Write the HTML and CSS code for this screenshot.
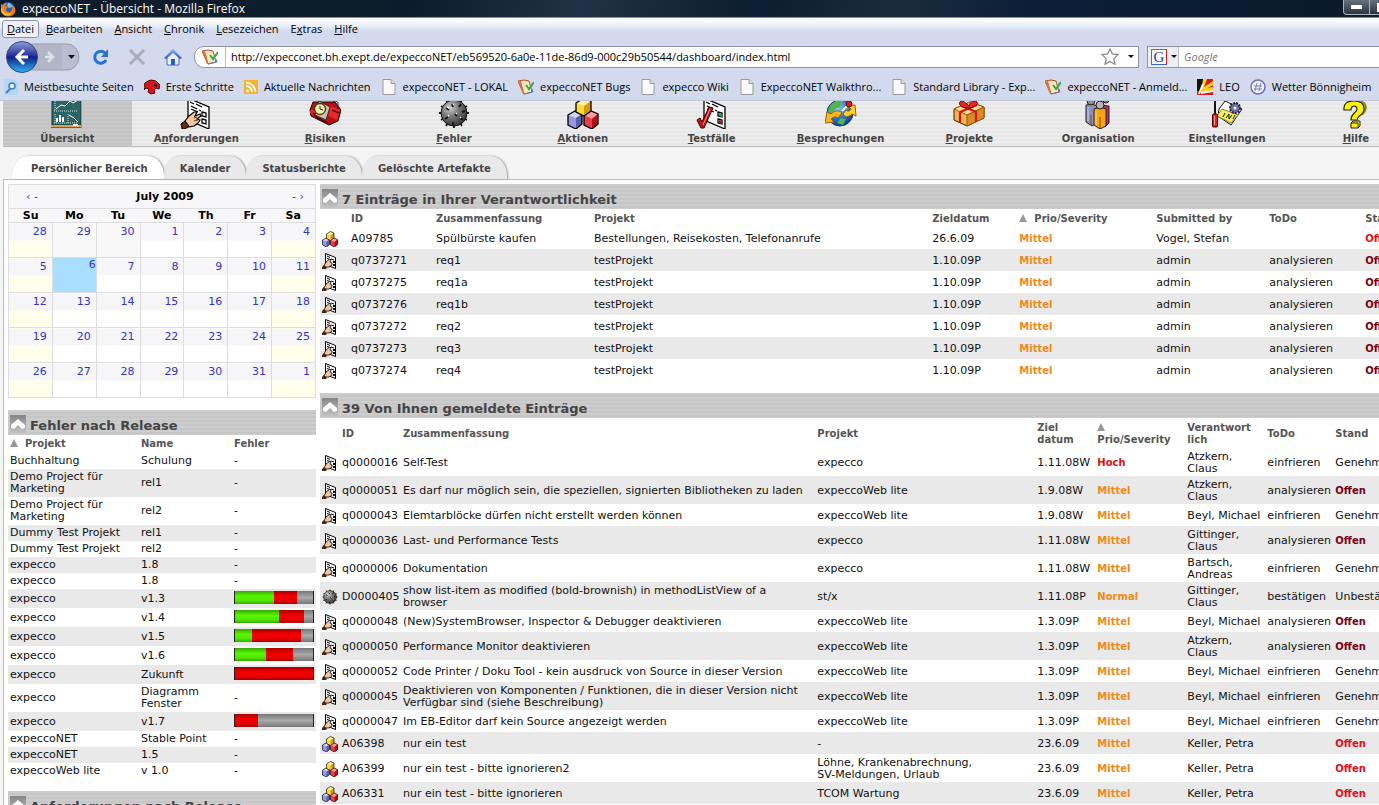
FILE: index.html
```html
<!DOCTYPE html>
<html lang="de">
<head>
    <meta charset="UTF-8">
    <meta name="viewport" content="width=device-width, initial-scale=1.0">
    <title>expeccoNET - Übersicht</title>
    <link rel="stylesheet" href="styles.css">
</head>
<body>
    <!-- Icon definitions -->
    <svg class="defs" width="0" height="0" aria-hidden="true">
        <defs>
            <linearGradient id="blueBall" x1="0" y1="0" x2="0" y2="1">
                <stop offset="0" stop-color="#8f9fd6"/><stop offset=".45" stop-color="#27349c"/><stop offset=".5" stop-color="#101f86"/><stop offset="1" stop-color="#2fb5f5"/>
            </linearGradient>
            <radialGradient id="mineFill" cx=".35" cy=".3" r=".8">
                <stop offset="0" stop-color="#d0d0d0"/><stop offset=".4" stop-color="#7c7c7c"/><stop offset="1" stop-color="#2b2b2b"/>
            </radialGradient>
            <radialGradient id="globeFill" cx=".4" cy=".3" r=".8">
                <stop offset="0" stop-color="#8fd0ff"/><stop offset=".5" stop-color="#2a78cc"/><stop offset="1" stop-color="#0d2f78"/>
            </radialGradient>
            <linearGradient id="houseFill" x1="0" y1="0" x2="0" y2="1">
                <stop offset="0" stop-color="#8fb0f0"/><stop offset="1" stop-color="#2b57bd"/>
            </linearGradient>
        </defs>
        <symbol id="i-board" viewBox="0 0 32 32">
            <path d="M1 0h29v28H1z" fill="#2d6565" stroke="#143636"/>
            <path d="M3 14h24M3 26h24M17 17v9M4 2v12M4 17v9" stroke="#d5e8e8" stroke-dasharray="1 1" fill="none"/>
            <path d="M5 12l5-4 4 1 5-5 3 2 5-3" stroke="#fff" fill="none"/>
            <path d="M6 21v4M9 18v7M12 20v5" stroke="#fff" stroke-width="2"/>
            <path d="M18 18l5 3 4 4" stroke="#fff" fill="none"/>
            <path d="M0 28h30v2H0z" fill="#d9a25c"/><path d="M0 30h30v1H0z" fill="#8a5a23"/>
            <path d="M22 27h5v2h-5z" fill="#fff"/><path d="M30 2h1v29h-1z" fill="#999"/>
        </symbol>
        <symbol id="i-sheet" viewBox="0 0 32 32">
            <path d="M8 1l21 9v22L8 23z" fill="#fff" stroke="#000" stroke-width="1.300"/>
            <path d="M10 5l4 2M16 7l6 3M11 9l6 3M11 12l7 3M19 13l2 1" stroke="#000" stroke-width="1.300"/>
            <path d="M22 15l4 1v4l-4-1zM22 22l4 1v4l-4-1z" fill="#fff" stroke="#000" stroke-width="1.300"/>
        </symbol>
        <symbol id="i-request" viewBox="0 0 32 32">
            <use href="#i-sheet"/>
            <path d="M5 24l4-5 5-4h3l-2 4 5-2 1 2-4 3 3 1-2 3-4 3-6 1z" fill="#f6c9a0" stroke="#000" stroke-width="1.200"/>
            <path d="M14 21l3-1M14 24l4-1" stroke="#6a3f20"/>
            <path d="M1 27l4-3 4 5-4 3H2z" fill="#5a2f17" stroke="#000"/>
        </symbol>
        <symbol id="i-request-small" viewBox="0 0 16 16">
            <path d="M3.500 .5l10 4v11l-10-4z" fill="#fff" stroke="#000"/>
            <path d="M5 3l3 1.500M5 5.500l3 1M9 6l3 1" stroke="#000"/>
            <path d="M11 8h2v2h-2zM11 11h2v2h-2z" fill="#000"/>
            <path d="M2 13l2-4 4-3 1 1-1 2 2 1v2l-3 2H3z" fill="#f3c6a2" stroke="#000" stroke-width=".8"/>
            <path d="M0 14l2-2 3 3-1 1H0z" fill="#4a2410"/>
        </symbol>
        <symbol id="i-test" viewBox="0 0 32 32">
            <use href="#i-sheet"/>
            <path d="M23 16l3 1v3l-3-1z" fill="#2aa03a"/><path d="M23 23l3 1v3l-3-1z" fill="#c01010"/>
            <path d="M1 23l3-2 2 4 7-15 4 1-9 20H5z" fill="#c4161c" stroke="#3b0000"/>
            <path d="M7 28l7-16" stroke="#ff8a8a"/>
        </symbol>
        <symbol id="i-risk" viewBox="0 0 32 32">
            <path d="M4 5l22 0 6 8-3 11-9 4-18-9-1-6z" fill="#b70f14" stroke="#2a0000"/>
            <path d="M22 9l9 4-3 10-9-4zM2 12l5 3-2 4-4-3z" fill="#e9272c"/>
            <path d="M7 20l12 6M23 13l7 3M4 16l4 4" stroke="#5d0004" stroke-width="1.500"/>
            <path d="M10 4l11 6-4 13-11-5z" fill="#c6c2b5" stroke="#333"/>
            <circle cx="11" cy="12" r="5.500" fill="#f5edb2" stroke="#4b3a00" stroke-width="1.300"/>
            <path d="M11 9v3l3 1" stroke="#222" fill="none"/>
            <path d="M23 7c2-5 7-3 6 1s1 4 2 3" stroke="#222" fill="none"/>
        </symbol>
        <symbol id="i-mine" viewBox="0 0 32 32">
            <path d="M16 1v30M3 9l26 14M3 23L29 9M8 3l16 26M24 3L8 29M1 16h30" stroke="#111" stroke-width="1.800"/>
            <circle cx="16" cy="16" r="13" fill="url(#mineFill)" stroke="#111"/>
            <path d="M8 11l3 2M14 7l1 3M21 10l2-3M10 20l-3 2M17 17l2 2M22 21l3 2M15 25l0 3M24 15l3-1" stroke="#111" stroke-width="2"/>
            <path d="M9 10l2 1M15 7l1 1M18 16l1 1M22 20l1 1M10 19l1-1" stroke="#fff" stroke-width="1.500"/>
        </symbol>
        <symbol id="i-cubes" viewBox="0 0 32 32">
            <path d="M1 18l7-4 7 3v10l-6 5-8-4z" fill="#9698e0"/>
            <path d="M1 18l8 3 6-4-7-3z" fill="#d3d4fb"/><path d="M9 21v11l6-5V17z" fill="#5c5eae"/>
            <path d="M1 18l7-4 7 3v10l-6 5-8-4z" fill="none" stroke="#000" stroke-width="1.300"/>
            <path d="M17 18l7-4 7 3v10l-6 5-8-4z" fill="#e8404b"/>
            <path d="M17 18l8 4 6-5-7-3z" fill="#ff9a9f"/><path d="M25 22v10l6-5V17z" fill="#b80d18"/>
            <path d="M17 18l7-4 7 3v10l-6 5-8-4z" fill="none" stroke="#000" stroke-width="1.300"/>
            <path d="M9 6l8-5 7 3v10l-7 5-8-4z" fill="#ffd83a"/>
            <path d="M9 6l8 3 7-5-7-3z" fill="#fff2a0"/><path d="M17 9v10l7-5V4z" fill="#d99a08"/>
            <path d="M9 6l8-5 7 3v10l-7 5-8-4z" fill="none" stroke="#000" stroke-width="1.300"/>
        </symbol>
        <symbol id="i-globe" viewBox="0 0 32 32">
            <circle cx="15" cy="16" r="13" fill="url(#globeFill)" stroke="#123a70"/>
            <path d="M5 9l6-5 7 0-3 6-5 2-3 4-4-1zM20 6l5 4-4 4zM12 26l4-5 5 1-3 6z" fill="#53b54b"/>
            <path d="M0 26l2-11 4 2c4-4 8-4 11-1l-4 5c-3-2-5-1-7 1l3 3z" fill="#ffb61c" stroke="#a06000"/>
            <path d="M30 8l1 11-4-2c-4 4-7 3-9 0l3-4c2 2 4 1 5-1l-3-3z" fill="#ffcf32" stroke="#a06000"/>
            <path d="M17 14l7-7" stroke="#fff" stroke-width="2"/><circle cx="24" cy="7" r="3" fill="#e01a24" stroke="#700"/>
        </symbol>
        <symbol id="i-gift" viewBox="0 0 32 32">
            <path d="M1 12l16-7 14 5v11l-17 8-13-6z" fill="#f4b44f" stroke="#3c1c00"/>
            <path d="M1 12l13 6 17-8-14-5z" fill="#ffdc94" stroke="#9a5b10"/>
            <path d="M14 18l17-8v11l-17 8z" fill="#d98a21" stroke="#9a5b10"/>
            <path d="M7 15v11M23 14v11M7 15l17-7M9 9l14 6" stroke="#d8141b" stroke-width="2.200"/>
            <path d="M16 11C9 11 5 8 7 5s7 2 9 4c1-5 6-6 8-4s-3 5-8 6z" fill="#e8262c" stroke="#7d0005"/>
        </symbol>
        <symbol id="i-people" viewBox="0 0 32 32">
            <g stroke="#222">
                <path d="M19 8l8 1v17l-4 4-4-3z" fill="#b72c68"/>
                <path d="M4 8l6-1 5 2v17l-5 3-6-4z" fill="#8d92c6"/>
                <circle cx="9" cy="4" r="4" fill="#8f8f8f"/><circle cx="24" cy="3" r="3" fill="#777"/>
                <path d="M12 12l6-2 6 2v17l-6 3-6-4z" fill="#f8a310"/>
                <circle cx="18" cy="8" r="4" fill="#b4b4b4"/>
            </g>
            <path d="M14 14v14M6 10v14" stroke="#fff" opacity=".6"/><path d="M18 20v11M9 18v10" stroke="#7a4a00"/>
        </symbol>
        <symbol id="i-settings" viewBox="0 0 32 32">
            <path d="M8 12l6-8 17 8-11 16-13-9z" fill="#fff" stroke="#111"/>
            <path d="M6 19l5-7 16 6-7 8z" fill="#f4ee64" stroke="#8a8414"/>
            <path d="M14 16l-2 4M15 21l3-4v5l3-4M24 18l-2 4" stroke="#111" fill="none"/>
            <circle cx="24" cy="11" r="5" fill="#6c6e9e"/><circle cx="24" cy="11" r="5" fill="none" stroke="#22234d" stroke-dasharray="2 1" stroke-width="2"/><circle cx="24" cy="11" r="1.500" fill="#fff"/>
            <path d="M4 2v15" stroke="#111" stroke-width="2"/><rect x="1.500" y="17" width="5" height="13" rx="1" fill="#e1202a" stroke="#500"/>
            <path d="M3.500 19v9" stroke="#ff9a9a"/>
        </symbol>
        <symbol id="i-help" viewBox="0 0 32 32">
            <path d="M19 3c9 1 10 10 4 15h-6z" fill="#8f8a12"/>
            <path d="M4 13C3 6 8 4 14 4s10 3 10 8c0 7-7 6-7 11h-6c0-7 6-7 6-11 0-4-6-4-6 1z" fill="#fff200" stroke="#222" stroke-width="1.200"/>
            <path d="M11 26l2-2h7v5l-2 2h-7z" fill="#fff200" stroke="#222"/><path d="M11 26h7v5" stroke="#222" fill="none"/>
        </symbol>
        <symbol id="i-page" viewBox="0 0 16 16"><path d="M2 .5h8l4 4v11H2z" fill="#fafafa" stroke="#9b9b9b"/><path d="M10 .5v4h4" fill="#ddd" stroke="#9b9b9b"/></symbol>
        <symbol id="i-expecco" viewBox="0 0 16 16">
            <path d="M0 2l6-1 5 1 3 11-8 2z" fill="#fbe9c0" stroke="#b5482a"/><path d="M0 3l3-1 3 11-1 2z" fill="#d8703b"/>
            <path d="M6 15l9-2-1-3" fill="none" stroke="#4a83c8"/><path d="M8 6l3 4 5-7" fill="none" stroke="#35a845" stroke-width="2"/>
        </symbol>
        <symbol id="i-up" viewBox="0 0 16 18"><path d="M1 10l7-6 7 6v3l-3 1-4-4-4 4-3-1z" fill="#fff"/></symbol>
        <symbol id="i-sort" viewBox="0 0 8 8"><path d="M4 0l4 8H0z" fill="#979797"/></symbol>
    </svg>

    <!-- Browser window -->
    <header class="browser">
        <div class="titlebar">
            <svg width="16" height="16" viewBox="0 0 16 16"><circle cx="8" cy="8" r="7" fill="#2b5fb8"/><path d="M8 2c3 0 4 2 4 4l-3 1-2-2z" fill="#7fc4f4"/><path d="M1 3l2 1c1-2 3-2 4-2L5 5l3 1-2 2c0 4 5 4 6 1 1-2 0-4-1-5 4 1 5 4 4 7-1 6-14 6-14-2z" fill="#f07d16"/><path d="M2 6c0 6 5 8 10 6-3 4-11 3-11-4z" fill="#ffc23a"/></svg>
            <span class="window-title">expeccoNET - Übersicht - Mozilla Firefox</span>
            <span class="window-buttons">
                <button type="button" aria-label="Minimieren"><i class="minimize"></i></button>
                <button type="button" aria-label="Maximieren"><i class="maximize"></i></button>
            </span>
        </div>
        <nav class="menubar">
            <button type="button" class="open"><u>D</u>atei</button>
            <button type="button"><u>B</u>earbeiten</button>
            <button type="button"><u>A</u>nsicht</button>
            <button type="button"><u>C</u>hronik</button>
            <button type="button"><u>L</u>esezeichen</button>
            <button type="button">E<u>x</u>tras</button>
            <button type="button"><u>H</u>ilfe</button>
        </nav>
        <div class="toolbar">
            <button type="button" class="history" aria-label="Zurück">
                <svg width="78" height="34" viewBox="0 0 78 34">
                    <path d="M19 4h46a11 12 0 0 1 0 26H19z" fill="#b9bfd0" stroke="#959bad"/>
                    <path d="M30 5h30v24H30z" fill="#b0b6c6"/>
                    <path d="M46 12l5 5-5 5M43 17h8" fill="none" stroke="#dde1ec" stroke-width="2.500"/>
                    <path d="M66 15h7l-3.500 4z" fill="#111"/>
                    <circle cx="20" cy="17" r="15.500" fill="url(#blueBall)" stroke="#39457e"/>
                    <path d="M22 10l-7 7 7 7M15 17h11" fill="none" stroke="#fff" stroke-width="3"/>
                </svg>
            </button>
            <button type="button" aria-label="Neu laden"><svg width="18" height="18" viewBox="0 0 18 18"><path d="M14 12a6 6 0 1 1-1-7" fill="none" stroke="#2472d6" stroke-width="3"/><path d="M16 1v8H9z" fill="#2472d6"/></svg></button>
            <button type="button" aria-label="Stopp"><svg width="18" height="18" viewBox="0 0 18 18"><path d="M2 2l14 14M16 2L2 16" stroke="#a9acb6" stroke-width="3"/></svg></button>
            <button type="button" class="home" aria-label="Startseite"><svg width="18" height="18" viewBox="0 0 18 18"><path d="M3 9l6-6 6 6v8H3z" fill="#e6eefc" stroke="#4a6cb5"/><path d="M0 10l9-9 9 9-2 1-7-6-7 6z" fill="url(#houseFill)"/><path d="M7 11h4v6H7z" fill="#2d5cc0"/></svg></button>
            <div class="address">
                <span class="site-icon"><svg width="16" height="16"><use href="#i-expecco"/></svg></span>
                <input type="text" aria-label="Adresse" value="http://expecconet.bh.exept.de/expeccoNET/eb569520-6a0e-11de-86d9-000c29b50544/dashboard/index.html">
                <svg width="18" height="17" viewBox="0 0 18 17"><path d="M9 1l2.300 5 5.700.6-4.200 4 1.100 5.600L9 13.500l-4.900 2.700 1.100-5.600L1 6.600 6.700 6z" fill="#fff" stroke="#8b8b8b" stroke-width="1.300"/></svg>
                <i class="caret"></i>
            </div>
            <div class="search">
                <span class="engine"><b>G</b><i class="caret"></i></span>
                <input type="text" aria-label="Suche" placeholder="Google">
            </div>
        </div>
        <nav class="bookmarks">
            <a href="#"><svg width="14" height="16" viewBox="0 0 14 16"><path d="M0 0h9l5 4v12H0z" fill="#b5d6f4"/><circle cx="8" cy="7" r="3" fill="#e9f4ff" stroke="#3f7ebd" stroke-width="1.500"/><path d="M6 10l-4 4" stroke="#3f7ebd" stroke-width="2"/></svg>Meistbesuchte Seiten</a>
            <a href="#"><svg width="16" height="16" viewBox="0 0 16 16"><path d="M1 4l3-2 3-1 5 1 4 4-1 4-3-1-2 2 1 3-4 1-3-2 1-3-3-1-2 2 1-3-1-2z" fill="#d9141a" stroke="#5a0000"/><path d="M10 6l3 1" stroke="#000" stroke-width="2"/></svg>Erste Schritte</a>
            <a href="#"><svg width="14" height="14" viewBox="0 0 14 14"><path d="M0 0h14v14H0z" fill="#f4b32b"/><circle cx="3.500" cy="11" r="1.500" fill="#fff"/><path d="M2 6a6 6 0 0 1 6 6M2 2.500a10 10 0 0 1 9.500 9.500" fill="none" stroke="#fff" stroke-width="1.800"/></svg>Aktuelle Nachrichten</a>
            <a href="#"><svg width="16" height="16"><use href="#i-page"/></svg>expeccoNET - LOKAL</a>
            <a href="#"><svg width="16" height="16"><use href="#i-expecco"/></svg>expeccoNET Bugs</a>
            <a href="#"><svg width="16" height="16"><use href="#i-page"/></svg>expecco Wiki</a>
            <a href="#"><svg width="16" height="16"><use href="#i-page"/></svg>ExpeccoNET Walkthro...</a>
            <a href="#"><svg width="16" height="16"><use href="#i-page"/></svg>Standard Library - Exp...</a>
            <a href="#"><svg width="16" height="16"><use href="#i-expecco"/></svg>expeccoNET - Anmeld...</a>
            <a href="#"><svg width="16" height="16" viewBox="0 0 16 16"><path d="M0 0h16v16H0z" fill="#d81a1a"/><path d="M0 0h7L3 12H0z" fill="#111"/><path d="M6 0h4L7 8l9-6v4l-5 3 5-1v3L4 14z" fill="#ffcf20"/><path d="M2 15l4-10M4 14l12-2" stroke="#fff" stroke-width="2"/></svg>LEO</a>
            <a href="#"><svg width="16" height="16" viewBox="0 0 16 16"><circle cx="8" cy="8" r="7" fill="#f1f2fb" stroke="#6a6fb0" stroke-width="1.500"/><path d="M7 4L5 12M11 4l-2 8M4 7h8M4 10h8" stroke="#7b80c0"/></svg>Wetter Bönnigheim</a>
        </nav>
    </header>

    <main class="page">
        <nav class="mainnav">
            <a href="#" class="active"><svg><use href="#i-board"/></svg>Übersicht</a>
            <a href="#"><svg><use href="#i-request"/></svg><span>A<u>n</u>forderungen</span></a>
            <a href="#"><svg><use href="#i-risk"/></svg><span><u>R</u>isiken</span></a>
            <a href="#"><svg><use href="#i-mine"/></svg><span><u>F</u>ehler</span></a>
            <a href="#"><svg><use href="#i-cubes"/></svg><span><u>A</u>ktionen</span></a>
            <a href="#"><svg><use href="#i-test"/></svg><span><u>T</u>estfälle</span></a>
            <a href="#"><svg><use href="#i-globe"/></svg><span><u>B</u>esprechungen</span></a>
            <a href="#"><svg><use href="#i-gift"/></svg><span><u>P</u>rojekte</span></a>
            <a href="#"><svg><use href="#i-people"/></svg><span>Or<u>g</u>anisation</span></a>
            <a href="#"><svg><use href="#i-settings"/></svg><span>Ein<u>s</u>tellungen</span></a>
            <a href="#"><svg><use href="#i-help"/></svg><span><u>H</u>ilfe</span></a>
        </nav>
        <nav class="tabs">
            <a href="#" class="active">Persönlicher Bereich</a>
            <a href="#">Kalender</a>
            <a href="#">Statusberichte</a>
            <a href="#">Gelöschte Artefakte</a>
        </nav>

        <div class="panel">
            <aside class="sidebar">
                <div class="month"><span><a href="#">‹</a> <a href="#">-</a></span><strong>July 2009</strong><span><a href="#">-</a> <a href="#">›</a></span></div>
                <table class="calendar">
                    <thead>
                        <tr><th>Su</th><th>Mo</th><th>Tu</th><th>We</th><th>Th</th><th>Fr</th><th>Sa</th></tr>
                    </thead>
                    <tbody>
                        <tr><td class="weekend"><a href="#">28</a></td><td class="other"><a href="#">29</a></td><td class="other"><a href="#">30</a></td><td><a href="#">1</a></td><td><a href="#">2</a></td><td><a href="#">3</a></td><td class="weekend"><a href="#">4</a></td></tr>
                        <tr><td class="weekend"><a href="#">5</a></td><td class="today"><a href="#">6</a></td><td><a href="#">7</a></td><td><a href="#">8</a></td><td><a href="#">9</a></td><td><a href="#">10</a></td><td class="weekend"><a href="#">11</a></td></tr>
                        <tr><td class="weekend"><a href="#">12</a></td><td><a href="#">13</a></td><td><a href="#">14</a></td><td><a href="#">15</a></td><td><a href="#">16</a></td><td><a href="#">17</a></td><td class="weekend"><a href="#">18</a></td></tr>
                        <tr><td class="weekend"><a href="#">19</a></td><td><a href="#">20</a></td><td><a href="#">21</a></td><td><a href="#">22</a></td><td><a href="#">23</a></td><td><a href="#">24</a></td><td class="weekend"><a href="#">25</a></td></tr>
                        <tr><td class="weekend"><a href="#">26</a></td><td><a href="#">27</a></td><td><a href="#">28</a></td><td><a href="#">29</a></td><td><a href="#">30</a></td><td><a href="#">31</a></td><td class="weekend"><a href="#">1</a></td></tr>
                    </tbody>
                </table>

                <section>
                    <h2><button type="button" aria-label="Einklappen"><svg><use href="#i-up"/></svg></button>Fehler nach Release</h2>
                    <table class="list releases">
                        <colgroup><col class="r-project"><col class="r-name"><col></colgroup>
                        <thead>
                            <tr><th><svg class="sort"><use href="#i-sort"/></svg>Projekt</th><th>Name</th><th>Fehler</th></tr>
                        </thead>
                        <tbody>
                            <tr><td>Buchhaltung</td><td>Schulung</td><td>-</td></tr>
                            <tr><td>Demo Project für Marketing</td><td>rel1</td><td>-</td></tr>
                            <tr><td>Demo Project für Marketing</td><td>rel2</td><td>-</td></tr>
                            <tr><td>Dummy Test Projekt</td><td>rel1</td><td>-</td></tr>
                            <tr><td>Dummy Test Projekt</td><td>rel2</td><td>-</td></tr>
                            <tr><td>expecco</td><td>1.8</td><td>-</td></tr>
                            <tr><td>expecco</td><td>1.8</td><td>-</td></tr>
                            <tr><td>expecco</td><td>v1.3</td><td><div class="bar"><i class="done" style="width:50%"></i><i class="open" style="width:30%"></i></div></td></tr>
                            <tr><td>expecco</td><td>v1.4</td><td><div class="bar"><i class="done" style="width:56%"></i><i class="open" style="width:33%"></i></div></td></tr>
                            <tr><td>expecco</td><td>v1.5</td><td><div class="bar"><i class="done" style="width:22%"></i><i class="open" style="width:63%"></i></div></td></tr>
                            <tr><td>expecco</td><td>v1.6</td><td><div class="bar"><i class="done" style="width:40%"></i><i class="open" style="width:35%"></i></div></td></tr>
                            <tr><td>expecco</td><td>Zukunft</td><td><div class="bar"><i class="open" style="width:100%"></i></div></td></tr>
                            <tr><td>expecco</td><td>Diagramm Fenster</td><td>-</td></tr>
                            <tr><td>expecco</td><td>v1.7</td><td><div class="bar"><i class="open" style="width:30%"></i></div></td></tr>
                            <tr><td>expeccoNET</td><td>Stable Point</td><td>-</td></tr>
                            <tr><td>expeccoNET</td><td>1.5</td><td>-</td></tr>
                            <tr><td>expeccoWeb lite</td><td>v 1.0</td><td>-</td></tr>
                        </tbody>
                    </table>
                </section>
                <section>
                    <h2><button type="button" aria-label="Einklappen"><svg><use href="#i-up"/></svg></button>Anforderungen nach Release</h2>
                </section>
            </aside>

            <div class="content">
                <section>
                    <h2><button type="button" aria-label="Einklappen"><svg><use href="#i-up"/></svg></button>7 Einträge in Ihrer Verantwortlichkeit</h2>
                    <table class="list entries">
                        <colgroup><col class="w-icon"><col class="w-id"><col class="w-summary"><col><col class="w-date"><col class="w-prio"><col class="w-user"><col class="w-todo"><col class="w-state"></colgroup>
                        <thead>
                            <tr><th></th><th>ID</th><th>Zusammenfassung</th><th>Projekt</th><th>Zieldatum</th><th><svg class="sort"><use href="#i-sort"/></svg>Prio/Severity</th><th>Submitted by</th><th>ToDo</th><th>Stand</th></tr>
                        </thead>
                        <tbody>
                            <tr><td><svg><use href="#i-cubes"/></svg></td><td>A09785</td><td>Spülbürste kaufen</td><td>Bestellungen, Reisekosten, Telefonanrufe</td><td>26.6.09</td><td class="medium">Mittel</td><td>Vogel, Stefan</td><td></td><td class="open-new">Offen</td></tr>
                            <tr><td><svg><use href="#i-request-small"/></svg></td><td>q0737271</td><td>req1</td><td>testProjekt</td><td>1.10.09P</td><td class="medium">Mittel</td><td>admin</td><td>analysieren</td><td class="open-old">Offen</td></tr>
                            <tr><td><svg><use href="#i-request-small"/></svg></td><td>q0737275</td><td>req1a</td><td>testProjekt</td><td>1.10.09P</td><td class="medium">Mittel</td><td>admin</td><td>analysieren</td><td class="open-old">Offen</td></tr>
                            <tr><td><svg><use href="#i-request-small"/></svg></td><td>q0737276</td><td>req1b</td><td>testProjekt</td><td>1.10.09P</td><td class="medium">Mittel</td><td>admin</td><td>analysieren</td><td class="open-old">Offen</td></tr>
                            <tr><td><svg><use href="#i-request-small"/></svg></td><td>q0737272</td><td>req2</td><td>testProjekt</td><td>1.10.09P</td><td class="medium">Mittel</td><td>admin</td><td>analysieren</td><td class="open-old">Offen</td></tr>
                            <tr><td><svg><use href="#i-request-small"/></svg></td><td>q0737273</td><td>req3</td><td>testProjekt</td><td>1.10.09P</td><td class="medium">Mittel</td><td>admin</td><td>analysieren</td><td class="open-old">Offen</td></tr>
                            <tr><td><svg><use href="#i-request-small"/></svg></td><td>q0737274</td><td>req4</td><td>testProjekt</td><td>1.10.09P</td><td class="medium">Mittel</td><td>admin</td><td>analysieren</td><td class="open-old">Offen</td></tr>
                        </tbody>
                    </table>
                </section>

                <section>
                    <h2><button type="button" aria-label="Einklappen"><svg><use href="#i-up"/></svg></button>39 Von Ihnen gemeldete Einträge</h2>
                    <table class="list entries reported">
                        <colgroup><col class="w-icon"><col class="w-id"><col><col class="w-project"><col class="w-date"><col class="w-prio"><col class="w-user"><col class="w-todo"><col class="w-state"></colgroup>
                        <thead>
                            <tr><th></th><th>ID</th><th>Zusammenfassung</th><th>Projekt</th><th>Ziel<br>datum</th><th><svg class="sort"><use href="#i-sort"/></svg><br>Prio/Severity</th><th>Verantwort<br>lich</th><th>ToDo</th><th>Stand</th></tr>
                        </thead>
                        <tbody>
                            <tr><td><svg><use href="#i-request-small"/></svg></td><td>q0000016</td><td>Self-Test</td><td>expecco</td><td>1.11.08W</td><td class="high">Hoch</td><td>Atzkern,<br>Claus</td><td>einfrieren</td><td>Genehmigt</td></tr>
                            <tr><td><svg><use href="#i-request-small"/></svg></td><td>q0000051</td><td>Es darf nur möglich sein, die speziellen, signierten Bibliotheken zu laden</td><td>expeccoWeb lite</td><td>1.9.08W</td><td class="medium">Mittel</td><td>Atzkern,<br>Claus</td><td>analysieren</td><td class="open-old">Offen</td></tr>
                            <tr><td><svg><use href="#i-request-small"/></svg></td><td>q0000043</td><td>Elemtarblöcke dürfen nicht erstellt werden können</td><td>expeccoWeb lite</td><td>1.9.08W</td><td class="medium">Mittel</td><td>Beyl, Michael</td><td>einfrieren</td><td>Genehmigt</td></tr>
                            <tr><td><svg><use href="#i-request-small"/></svg></td><td>q0000036</td><td>Last- und Performance Tests</td><td>expecco</td><td>1.11.08W</td><td class="medium">Mittel</td><td>Gittinger,<br>Claus</td><td>analysieren</td><td class="open-old">Offen</td></tr>
                            <tr><td><svg><use href="#i-request-small"/></svg></td><td>q0000006</td><td>Dokumentation</td><td>expecco</td><td>1.11.08W</td><td class="medium">Mittel</td><td>Bartsch,<br>Andreas</td><td>einfrieren</td><td>Genehmigt</td></tr>
                            <tr><td><svg><use href="#i-mine"/></svg></td><td>D0000405</td><td>show list-item as modified (bold-brownish) in methodListView of a<br>browser</td><td>st/x</td><td>1.11.08P</td><td class="medium">Normal</td><td>Gittinger,<br>Claus</td><td>bestätigen</td><td>Unbestätigt</td></tr>
                            <tr><td><svg><use href="#i-request-small"/></svg></td><td>q0000048</td><td>(New)SystemBrowser, Inspector &amp; Debugger deaktivieren</td><td>expeccoWeb lite</td><td>1.3.09P</td><td class="medium">Mittel</td><td>Beyl, Michael</td><td>analysieren</td><td class="open-old">Offen</td></tr>
                            <tr><td><svg><use href="#i-request-small"/></svg></td><td>q0000050</td><td>Performance Monitor deaktivieren</td><td>expeccoWeb lite</td><td>1.3.09P</td><td class="medium">Mittel</td><td>Atzkern,<br>Claus</td><td>analysieren</td><td class="open-old">Offen</td></tr>
                            <tr><td><svg><use href="#i-request-small"/></svg></td><td>q0000052</td><td>Code Printer / Doku Tool - kein ausdruck von Source in dieser Version</td><td>expeccoWeb lite</td><td>1.3.09P</td><td class="medium">Mittel</td><td>Beyl, Michael</td><td>einfrieren</td><td>Genehmigt</td></tr>
                            <tr><td><svg><use href="#i-request-small"/></svg></td><td>q0000045</td><td>Deaktivieren von Komponenten / Funktionen, die in dieser Version nicht<br>Verfügbar sind (siehe Beschreibung)</td><td>expeccoWeb lite</td><td>1.3.09P</td><td class="medium">Mittel</td><td>Beyl, Michael</td><td>einfrieren</td><td>Genehmigt</td></tr>
                            <tr><td><svg><use href="#i-request-small"/></svg></td><td>q0000047</td><td>Im EB-Editor darf kein Source angezeigt werden</td><td>expeccoWeb lite</td><td>1.3.09P</td><td class="medium">Mittel</td><td>Beyl, Michael</td><td>einfrieren</td><td>Genehmigt</td></tr>
                            <tr><td><svg><use href="#i-cubes"/></svg></td><td>A06398</td><td>nur ein test</td><td>-</td><td>23.6.09</td><td class="medium">Mittel</td><td>Keller, Petra</td><td></td><td class="open-new">Offen</td></tr>
                            <tr><td><svg><use href="#i-cubes"/></svg></td><td>A06399</td><td>nur ein test - bitte ignorieren2</td><td>Löhne, Krankenabrechnung,<br>SV-Meldungen, Urlaub</td><td>23.6.09</td><td class="medium">Mittel</td><td>Keller, Petra</td><td></td><td class="open-new">Offen</td></tr>
                            <tr><td><svg><use href="#i-cubes"/></svg></td><td>A06331</td><td>nur ein test - bitte ignorieren</td><td>TCOM Wartung</td><td>23.6.09</td><td class="medium">Mittel</td><td>Keller, Petra</td><td></td><td class="open-new">Offen</td></tr>
                        </tbody>
                    </table>
                </section>
            </div>
        </div>
    </main>
</body>
</html>
```

FILE: styles.css
```css
* {
    box-sizing: border-box;
}
body {
    margin: 0;
    height: 100vh;
    overflow: hidden;
    background: #f5f5f5;
    font-family: "DejaVu Sans", Verdana, sans-serif;
    font-size: 11px;
    line-height: 12px;
    color: #111;
}
a {
    color: inherit;
    text-decoration: none;
}
svg {
    display: block;
    flex: none;
}
.defs {
    position: absolute;
}
button {
    margin: 0;
    padding: 0;
    border: 0;
    background: none;
    font: inherit;
    color: inherit;
}
input {
    border: 0;
    padding: 0;
    min-width: 0;
    background: none;
    font: inherit;
    color: #000;
}

/* Browser window */
.browser {
    font-family: "Open Sans", "Segoe UI", sans-serif;
    font-size: 11px;
    line-height: 16px;
    color: #000;
    background: #d3daee;
}
.titlebar {
    display: flex;
    align-items: center;
    gap: 6px;
    height: 18px;
    background: linear-gradient(100deg, #101d2b 0%, #0c1c2c 30%, #223246 42%, #0b1d30 55%, #1a2c3c 65%, #0a1e38 75%, #0b1a2a 100%);
    border-bottom: 1px solid #8a939c;
    font-size: 12px;
    color: #fff;
}
.window-title {
    flex: 1;
}
.window-buttons {
    display: flex;
    align-self: flex-start;
    width: 36px;
    height: 15px;
    overflow: hidden;
    border: 1px solid #aab4bd;
    border-width: 0 0 1px 1px;
    border-radius: 0 0 0 4px;
    background: linear-gradient(#65727f, #29343f);
}
.window-buttons button {
    display: flex;
    flex: none;
    width: 26px;
    justify-content: center;
    align-items: center;
    border-right: 1px solid #aab4bd;
}
.minimize {
    width: 11px;
    height: 4px;
    background: #fff;
}
.maximize {
    width: 12px;
    height: 9px;
    border: 2px solid #fff;
}
.menubar {
    display: flex;
    align-items: center;
    height: 21px;
    padding: 0 2px;
    gap: 2px;
    background: linear-gradient(#fff, #e9edf7 40%, #d3daee 60%);
}
.menubar button {
    height: 18px;
    padding: 0 5px;
}
.menubar .open {
    padding: 0 4px;
    border: 1px solid #8e94a6;
    border-radius: 3px;
    background: #eef0f8;
}
.toolbar {
    display: flex;
    align-items: center;
    height: 35px;
    padding-left: 2px;
}
.toolbar > button {
    margin-right: 18px;
}
.toolbar > .history,
.toolbar > .home {
    margin-right: 12px;
}
.address,
.search {
    display: flex;
    align-items: center;
    height: 22px;
    border: 1px solid #8e94a6;
    background: #fff;
}
.address {
    flex: 1;
    padding-right: 4px;
    border-radius: 10px 0 0 10px;
}
.address input {
    flex: 1;
}
.site-icon {
    display: flex;
    width: 31px;
    height: 20px;
    margin-right: 5px;
    align-items: center;
    justify-content: center;
    border-right: 1px solid #b9bdca;
}
.address .caret {
    margin-left: 9px;
}
.caret {
    border: 3px solid transparent;
    border-top-color: #111;
    border-bottom: 0;
}
.search {
    width: 232px;
    margin-left: 8px;
    border-right: 0;
}
.search input {
    flex: 1;
    padding-left: 5px;
}
.search input::placeholder {
    font-style: italic;
    color: #777;
}
.engine {
    display: flex;
    align-items: center;
    gap: 4px;
    width: 31px;
    height: 20px;
    padding-left: 3px;
    background: #eceef2;
    border-right: 1px solid #b9bdca;
}
.engine b {
    width: 16px;
    height: 16px;
    border: 1px solid;
    border-color: #2f9a3c #c22 #3565c8 #2f9a3c;
    background: #fff;
    font: 15px/14px "Liberation Serif", serif;
    text-align: center;
    color: #1c3fae;
}
.bookmarks {
    display: flex;
    align-items: center;
    height: 27px;
    padding-left: 4px;
    gap: 10px;
    border-bottom: 1px solid #bcc3d6;
    white-space: nowrap;
}
.bookmarks a {
    display: flex;
    align-items: center;
    gap: 6px;
}

/* Application */
.page {
    width: 103%;
    padding-left: 3px;
}
.mainnav {
    display: grid;
    grid-template-columns: repeat(11, 1fr);
    height: 46px;
    overflow: hidden;
    border-bottom: 1px solid #b8b8b8;
    background: repeating-linear-gradient(#ededed 0 2px, #e6e6e6 2px 4px);
}
.mainnav a {
    display: flex;
    flex-direction: column;
    align-items: center;
    gap: 4px;
    font-size: 10px;
    font-weight: bold;
    color: #444;
}
.mainnav .active {
    background: repeating-linear-gradient(#cacaca 0 2px, #c4c4c4 2px 4px);
}
.mainnav svg {
    width: 32px;
    height: 32px;
    margin-top: -4px;
}
.tabs {
    display: flex;
    align-items: flex-end;
    height: 32px;
    padding-left: 9px;
}
.tabs a {
    height: 23px;
    padding: 0 16px;
    border-radius: 16px 16px 0 0 / 20px 20px 0 0;
    background: #e9e9e9;
    box-shadow: 1px 0 2px #999;
    font-size: 10px;
    font-weight: bold;
    line-height: 26px;
    color: #444;
}
.tabs .active {
    padding-left: 19px;
    background: #fff;
}
.panel {
    display: flex;
    gap: 4px;
    padding: 4px 0 0 4px;
    border: 1px solid #bbb;
    border-width: 1px 0 0 1px;
    background: #fff;
}
.sidebar {
    flex: none;
    width: 308px;
}
.content {
    flex: 1;
}
section {
    margin-bottom: 12px;
}
h2 {
    display: flex;
    gap: 4px;
    height: 25px;
    margin: 0;
    padding-left: 2px;
    background: repeating-linear-gradient(#cdcdcd 0 2px, #c6c6c6 2px 4px);
    font-size: 13px;
    line-height: 31px;
    color: #444;
}
h2 svg {
    width: 16px;
    height: 18px;
    margin-top: 2px;
    background: linear-gradient(#858585, #c2c2c2);
}

/* Calendar */
.month {
    display: flex;
    justify-content: space-between;
    align-items: center;
    height: 24px;
    padding: 0 11px 0 17px;
    border: 1px solid #ddd;
    border-bottom: 0;
    background: #f7f7f9;
    color: #33c;
}
.month strong {
    font-size: 11px;
    color: #000;
}
.calendar {
    width: 100%;
    margin-bottom: 12px;
    table-layout: fixed;
    border-collapse: collapse;
    border: 1px solid #ddd;
}
.calendar th {
    height: 14px;
    padding: 0;
    background: #f7f7f9;
    color: #000;
}
.calendar td {
    height: 35px;
    padding: 3px 5px 0 0;
    border: 1px solid #ddd;
    background: linear-gradient(#f6f6f8 17px, #fff 17px);
    text-align: right;
    vertical-align: top;
    color: #33c;
}
.calendar .weekend {
    background: linear-gradient(#f6f6f8 17px, #ffffeb 17px);
}
.calendar .other {
    background: #f8f8f9;
}
.calendar .today {
    padding: 1px 0 0;
    background: #a8deff;
}

/* Lists */
.list {
    width: 100%;
    table-layout: fixed;
    border-collapse: collapse;
}
.list th {
    padding: 2px;
    font-size: 10px;
    text-align: left;
    color: #555;
}
.list td {
    padding: 2px;
    white-space: nowrap;
}
.list tbody tr:nth-child(even) {
    background: #e9e9e9;
}
.list .sort {
    display: inline-block;
    width: 8px;
    height: 8px;
    margin-right: 7px;
}
.list thead {
    height: 18px;
}
.releases td {
    white-space: normal;
}
.r-project { width: 131px; }
.r-name { width: 93px; }
.entries th,
.entries td {
    padding: 3px 2px 1px;
}
.entries tbody tr {
    height: 22px;
}
.entries td svg {
    width: 16px;
    height: 16px;
}
.w-icon { width: 29px; }
.w-id { width: 85px; }
.w-summary { width: 158px; }
.w-date { width: 87px; }
.w-prio { width: 137px; }
.w-user { width: 113px; }
.w-todo { width: 96px; }
.w-state { width: 57px; }
.reported thead { height: 30px; }
.reported .w-icon { width: 20px; }
.reported .w-id { width: 61px; }
.reported .w-project { width: 220px; }
.reported .w-date { width: 60px; }
.reported .w-prio { width: 90px; }
.reported .w-user { width: 80px; }
.reported .w-todo { width: 68px; }
.reported .w-state { width: 87px; }
.list .high,
.list .medium,
.list .open-new,
.list .open-old {
    font-size: 10px;
    font-weight: bold;
}
.list .high { color: #e01010; }
.list .medium { color: #f08a18; }
.list .open-new { color: #e01020; }
.list .open-old { color: #780010; }

/* Release progress */
.bar {
    display: flex;
    width: 80px;
    height: 13px;
    margin-bottom: 2px;
    border: 1px solid #222;
    border-width: 0 1px;
    background: linear-gradient(#777, #aaa 50%, #777);
}
.bar .done {
    background: linear-gradient(#35a800, #5af500 40%, #50e800 75%, #35a800);
}
.bar .open {
    background: linear-gradient(#a80000, #f50000 40%, #e80000 75%, #a80000);
}
```
